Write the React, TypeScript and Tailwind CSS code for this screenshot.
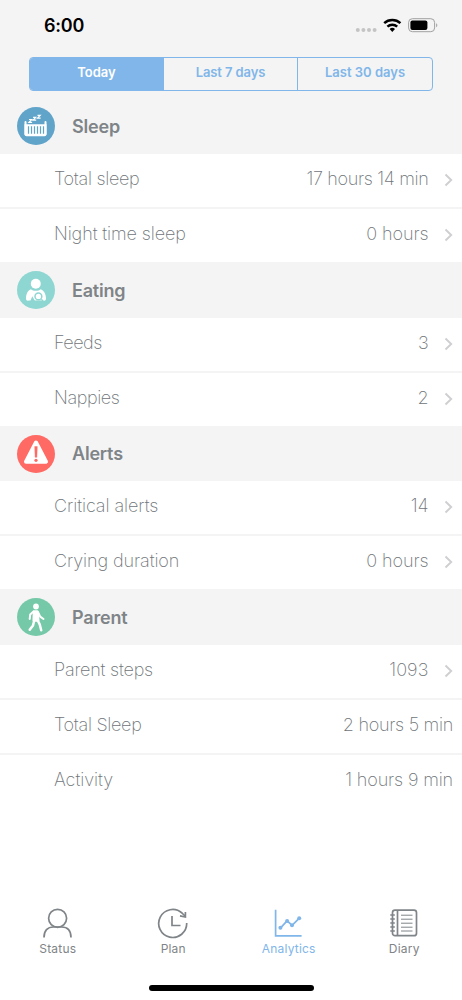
import type { ReactNode } from "react";

type Row = { label: string; value: string; link?: boolean; labelClass: string; valueClass?: string };
type Section = { title: string; color: string; icon: ReactNode; rows: Row[] };

const SleepIcon = () => (
  <svg viewBox="0 0 38 38" className="size-[38px]" fill="none" stroke="#fff">
    <path d="M8.500 15v12M28.500 15v12" strokeWidth="2" strokeLinecap="round" />
    <path d="M7.500 17.300h22v9.900a2 2 0 0 1-2 2h-18a2 2 0 0 1-2-2z" fill="#fff" stroke="none" />
    <path d="M11.500 19.300v7.500M14.500 19.300v7.500M17.500 19.300v7.500M20.500 19.300v7.500M23.500 19.300v7.500M26.500 19.300v7.500" stroke="#60a4ca" strokeWidth="1.200" />
    <path d="M12 12.500h2.700l-2.700 2.800h3.100M16.100 10.300h2.700l-2.700 2.800h3.100M20.500 8.300h2.700l-2.700 2.800h3.100" strokeWidth="1.200" />
  </svg>
);

const EatingIcon = () => (
  <svg viewBox="0 0 38 38" className="size-[38px]">
    <circle cx="18.800" cy="12.800" r="5" fill="#fff" />
    <path d="M9 27.500c0-4.500 1.800-8.300 5-9.300 2 2.200 7.600 2.200 9.600 0 3.200 1 5.400 4.800 5.400 9.300 0 2-1.400 2.500-2.600 2H11.600c-1.200.5-2.600 0-2.600-2z" fill="#fff" />
    <path d="M13.300 30.200l1.900-4.900 3 4.900z" fill="#8ed6d1" />
    <circle cx="21.400" cy="25.400" r="3.400" fill="#fff" stroke="#8ed6d1" strokeWidth="1.500" />
    <path d="M18.600 30.300h6.200M24.500 28l1.500 2.400" stroke="#8ed6d1" strokeWidth="1.200" fill="none" />
  </svg>
);

const AlertIcon = () => (
  <svg viewBox="0 0 38 38" className="size-[38px]">
    <path d="M19 7.500 29 26.700H9z" fill="#fff" stroke="#fff" strokeWidth="4" strokeLinejoin="round" />
    <path d="M17.700 11.500h2.600l-.4 10.800h-1.800z" fill="#ff6a64" stroke="#ff6a64" strokeWidth=".4" />
    <circle cx="19" cy="25.300" r="1.600" fill="#ff6a64" />
  </svg>
);

const WalkIcon = () => (
  <svg viewBox="0 0 38 38" className="size-[38px]" fill="none" stroke="#fff" strokeLinecap="round" strokeLinejoin="round">
    <circle cx="19" cy="8.500" r="2.900" fill="#fff" stroke="none" />
    <path d="M17 13.600h3.300l1 8.900h-4.600z" fill="#fff" strokeWidth="2.500" />
    <path d="M16.500 13.600l-3.300 3-.5 4.300M21 14l2.200 4.600 3.300 2.400" strokeWidth="2" />
    <path d="M17.200 22.800l-1.200 4.600-3.300 4.400M20.600 22.300l2.100 4.100 1.500 5.800" strokeWidth="2.500" />
  </svg>
);

const sections: Section[] = [
  {
    title: "Sleep",
    color: "bg-[#60a4ca]",
    icon: <SleepIcon />,
    rows: [
      { label: "Total sleep", value: "17 hours 14 min", link: true, labelClass: "tracking-[-0.3px]", valueClass: "tracking-[-0.33px]" },
      { label: "Night time sleep", value: "0 hours", link: true, labelClass: "tracking-[-0.1px]" },
    ],
  },
  {
    title: "Eating",
    color: "bg-[#8ed6d1]",
    icon: <EatingIcon />,
    rows: [
      { label: "Feeds", value: "3", link: true, labelClass: "tracking-[-0.5px]" },
      { label: "Nappies", value: "2", link: true, labelClass: "tracking-[-0.4px]" },
    ],
  },
  {
    title: "Alerts",
    color: "bg-[#ff6a64]",
    icon: <AlertIcon />,
    rows: [
      { label: "Critical alerts", value: "14", link: true, labelClass: "tracking-[-0.07px]" },
      { label: "Crying duration", value: "0 hours", link: true, labelClass: "tracking-[-0.1px]" },
    ],
  },
  {
    title: "Parent",
    color: "bg-[#75c9a8]",
    icon: <WalkIcon />,
    rows: [
      { label: "Parent steps", value: "1093", link: true, labelClass: "tracking-[-0.2px]", valueClass: "tracking-[0.1px]" },
      { label: "Total Sleep", value: "2 hours 5 min", labelClass: "tracking-[-0.3px]", valueClass: "tracking-[-0.28px]" },
      { label: "Activity", value: "1 hours 9 min", labelClass: "tracking-[-0.05px]", valueClass: "tracking-[-0.15px]" },
    ],
  },
];

const StatusBar = () => (
  <div className="flex h-[57px] items-start justify-between pr-[24px] pl-[44px]">
    <span className="pt-[14px] text-[18px] leading-6 font-semibold tracking-[-0.2px] text-black">6:00</span>
    <div className="flex pt-[17px]">
      <svg width="84" height="18" viewBox="0 0 84 18">
        <g fill="#c4c4c5">
          <circle cx="3.800" cy="13" r="2" />
          <circle cx="9.400" cy="13" r="2" />
          <circle cx="15" cy="13" r="2" />
          <circle cx="20.600" cy="13" r="2" />
        </g>
        <g fill="none" stroke="#000" strokeWidth="2.500">
          <path d="M30.200 6.200a12 12 0 0 1 16.200 0" />
          <path d="M33.400 9.600a7.300 7.300 0 0 1 9.800 0" />
        </g>
        <path d="M35.600 12a4 4 0 0 1 5.400 0l-2.700 2.900z" />
        <rect x="54.600" y="1.700" width="26" height="13" rx="3.800" fill="none" stroke="#a0a0a0" />
        <rect x="56.400" y="3.600" width="17" height="9.300" rx="2" />
        <path d="M82.200 6.200c1.500.5 1.500 3.500 0 4z" fill="#a0a0a0" />
      </svg>
    </div>
  </div>
);

const Tabs = () => (
  <div className="mx-[29px] grid h-[34px] grid-cols-3 divide-x divide-[#80b6e9] overflow-hidden rounded-[4px] border border-[#80b6e9] text-center text-[13px] font-semibold text-[#80b6e9]">
    <button className="bg-[#80b6e9] pb-[3px] text-white">Today</button>
    <button className="pb-[3px] tracking-[-0.1px]">Last 7 days</button>
    <button className="pb-[3px]">Last 30 days</button>
  </div>
);

const nav = [
  {
    label: "Status",
    icon: (
      <g strokeWidth="1.700">
        <circle cx="15.600" cy="11.300" r="9" />
        <path d="M2 30.500c0-7 3.500-10.500 9.500-10.500h8c6 0 9.500 3.500 9.500 10.500" />
      </g>
    ),
  },
  {
    label: "Plan",
    icon: (
      <g strokeWidth="1.700">
        <path d="M29.700 16A14 14 0 1 1 25 6l3 3" />
        <path d="M28.400 5v5l-5.400-1.200" />
        <path d="M15 9V18.500h8.500" />
      </g>
    ),
  },
  {
    label: "Analytics",
    active: true,
    icon: (
      <g strokeWidth="1.700">
        <path d="M2.600 2.800v26h26" />
        <path d="M7.600 20.800 14.100 13.800 19.100 18.300 26.100 11.300" />
        <g fill="currentColor" stroke="none">
          <circle cx="7.400" cy="20.800" r="2" />
          <circle cx="14.100" cy="13.900" r="2" />
          <circle cx="19" cy="18.300" r="2" />
          <circle cx="26.200" cy="11.200" r="2" />
        </g>
      </g>
    ),
  },
  {
    label: "Diary",
    icon: (
      <g>
        <rect x="4.500" y="3.200" width="24" height="25.500" rx="2.500" strokeWidth="1.700" />
        <path d="M9.500 3.200v25.500M2.300 8h4.500M2.300 12h4.500M2.300 16h4.500M2.300 20h4.500M2.300 24h4.500" strokeWidth="1.700" />
        <path d="M13 8.200h11.500M13 12.200h11.500M13 16.200h11.500M13 20.200h11.500M13 24h11.500" strokeWidth="1" />
      </g>
    ),
  },
];

export default function App() {
  return (
    <div className="flex h-[1000px] w-[462px] flex-col overflow-hidden bg-white font-['Inter',sans-serif]">
      <div className="h-[98.400px] shrink-0 bg-[#f4f4f4]">
        <StatusBar />
        <Tabs />
      </div>
      <main className="grow">
        {sections.map((s) => (
          <section key={s.title}>
            <h2 className="flex h-[55.600px] items-center gap-[17px] bg-[#f4f4f4] pt-[0.600px] pl-[17px] text-[18px] font-semibold tracking-[-0.2px] text-[#7f8488]">
              <span className={`size-[38px] rounded-full ${s.color}`}>{s.icon}</span>
              {s.title}
            </h2>
            {s.rows.map((r) => (
              <div
                key={r.label}
                className="flex h-[55px] justify-between border-b-2 border-[#f4f4f4] pr-[9px] pl-[54px] text-[18px] leading-[49px] font-extralight text-[#6f7579] last:h-[53px] last:border-b-0"
              >
                <span className={r.labelClass}>{r.label}</span>
                <span className={`flex ${r.valueClass ?? "tracking-[-0.1px]"}`}>
                  {r.value}
                  {r.link && (
                    <svg className="mt-[19px] ml-[15.500px]" width="9" height="14" viewBox="0 0 9 14" fill="none" stroke="#cfcfd1" strokeWidth="1.900">
                      <path d="M1.500 1.500 7.200 7l-5.700 5.500" />
                    </svg>
                  )}
                </span>
              </div>
            ))}
          </section>
        ))}
      </main>
      <nav className="grid h-[78px] shrink-0 grid-cols-4">
        {nav.map((n) => (
          <button key={n.label} className={`flex flex-col items-center gap-[2px] text-[12px] leading-4 tracking-[0.2px] ${n.active ? "text-[#80b6e9]" : "text-[#7f8488]"}`}>
            <svg width="32" height="32" viewBox="0 0 32 32" fill="none" stroke="currentColor">{n.icon}</svg>
            {n.label}
          </button>
        ))}
      </nav>
      <div className="mx-auto mb-[9px] h-[6px] w-[165px] shrink-0 rounded-full bg-black" />
    </div>
  );
}
